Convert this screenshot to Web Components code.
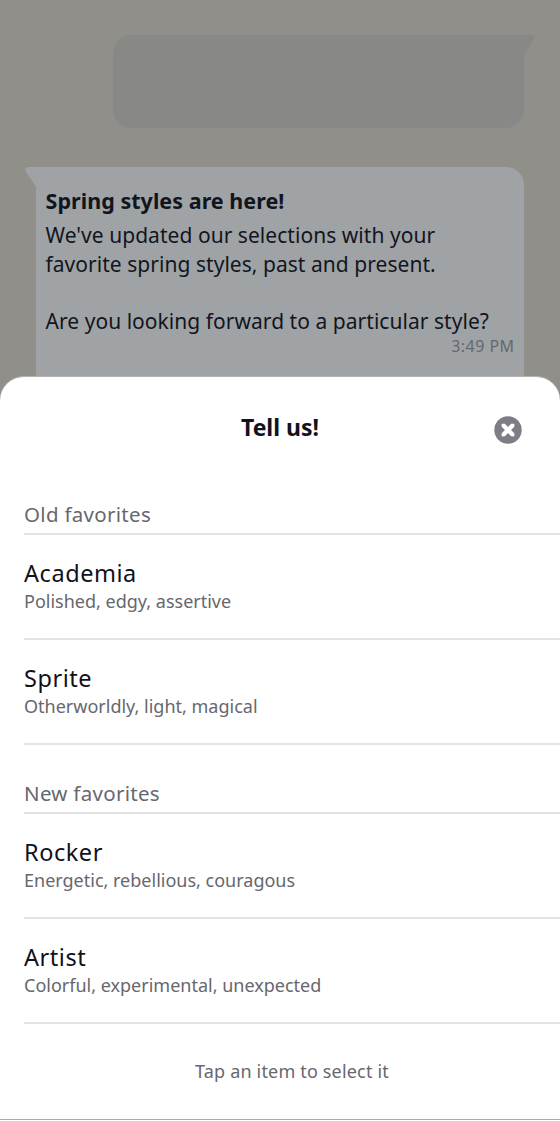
<!DOCTYPE html>
<html lang="en">
<head>
<meta charset="utf-8">
<title>Style picker</title>
<style>
html, body { margin: 0; height: 1121px; overflow: hidden; }
body { font-family: "Noto Sans", sans-serif; background: #908f8a; color: #13151e; }
</style>
</head>
<body>
<style-screen></style-screen>
<script>
const define = (name, html) => customElements.define(name, class extends HTMLElement {
  constructor() {
    super();
    const t = document.createElement('template');
    t.innerHTML = html;
    this.attachShadow({ mode: 'open' }).append(t.content.cloneNode(true));
  }
});

define('sent-bubble', `
<style>
:host { display: block; width: 423px; height: 93px; margin-left: 113px; }
svg { display: block; }
</style>
<svg width="423" height="93" viewBox="0 0 423 93"><path fill="#888886" d="M18 0H419.500Q422 1 421 4L411 20V75A18 18 0 0 1 393 93H18A18 18 0 0 1 0 75V18A18 18 0 0 1 18 0Z"/></svg>`);

define('received-bubble', `
<style>
:host { display: grid; width: 499px; height: 240px; margin-left: 25px; }
svg, .content { grid-area: 1 / 1; }
.content { padding: 20px 10px 0 20.500px; display: flex; flex-direction: column; }
.title { font-weight: 700; font-size: 21.500px; line-height: 28px; color: #12151e; height: 34px; white-space: nowrap; letter-spacing: .04px; }
.body { font-size: 21px; line-height: 28.670px; white-space: nowrap; letter-spacing: .04px; }
.time { align-self: flex-end; font-size: 16px; line-height: 22px; color: #65686d; letter-spacing: .45px; margin: -1px -.5px 0 0; }
</style>
<svg width="499" height="240" viewBox="0 0 499 240"><path fill="#9fa3a5" d="M3 0H481A18 18 0 0 1 499 18V240H11V20L.5 4Q-.5 1 3 0Z"/></svg>
<div class="content">
  <div class="title"><slot name="title"></slot></div>
  <div class="body"><slot></slot></div>
  <div class="time"><slot name="time"></slot></div>
</div>`);

define('close-button', `
<style>:host { display: block; width: 28px; height: 28px; } svg { display: block; }</style>
<svg width="28" height="28" viewBox="0 0 28 28"><circle cx="14" cy="14" r="13.700" fill="#7e7d85"/><path d="M9 9L19 19M19 9L9 19" stroke="#fff" stroke-width="4.400"/><path d="M9 9L19 19M19 9L9 19" stroke="#fff" stroke-width="3" stroke-linecap="round"/></svg>`);

define('sheet-header', `
<style>
:host { display: grid; grid-template-columns: 1fr auto 1fr; height: 116px; padding: 34px 38px 0 38px; box-sizing: border-box; align-items: start; }
h1 { grid-column: 2; margin: 0; font-size: 23px; line-height: 32px; font-weight: 700; color: #12121c; white-space: nowrap; }
close-button { justify-self: end; margin-top: 5px; }
</style>
<h1><slot></slot></h1><close-button></close-button>`);

define('style-group', `
<style>
:host { display: block; padding-left: 24px; }
:host(:not(:first-of-type)) { padding-top: 27px; }
.label { box-sizing: border-box; height: 42px; padding-top: 7px; border-bottom: 2px solid #e4e4e4; font-size: 20.500px; line-height: 28px; color: #67676d; letter-spacing: .3px; }
</style>
<div class="label"><slot name="label"></slot></div><slot></slot>`);

define('style-item', `
<style>
:host { display: block; box-sizing: border-box; height: 105px; padding-top: 22px; border-bottom: 2px solid #e4e4e4; white-space: nowrap; }
.name { font-size: 23.500px; line-height: 32px; color: #111119; letter-spacing: .55px; }
.note { font-size: 18px; line-height: 24px; color: #67676d; }
</style>
<div class="name"><slot name="name"></slot></div><div class="note"><slot></slot></div>`);

define('bottom-sheet', `
<style>
:host { display: flex; flex-direction: column; box-sizing: border-box; background: #fff; border-top: 1px solid #b1b0b4; border-radius: 24px 24px 0 0; height: 745px; }
.hint { flex: 1; padding: 35px 0 0 24px; text-align: center; font-size: 18px; line-height: 24px; color: #67676d; letter-spacing: .17px; }
.rule { height: 1px; background: #ababab; margin-bottom: 1px; }
</style>
<slot name="header"></slot><slot></slot>
<div class="hint"><slot name="hint"></slot></div>
<div class="rule"></div>`);

define('style-screen', `
<style>
:host { display: block; position: relative; height: 1121px; background: #908f8a; overflow: hidden; }
.chat { display: flex; flex-direction: column; gap: 39px; padding-top: 35px; }
bottom-sheet { position: absolute; left: 0; right: 0; bottom: 0; }
</style>
<div class="chat">
  <sent-bubble></sent-bubble>
  <received-bubble>
    <span slot="title">Spring styles are here!</span>
    <span>We've updated our selections with your</span><br><span>favorite spring styles, past and present.</span><br><br><span>Are you looking forward to a particular style?</span>
    <span slot="time">3:49 PM</span>
  </received-bubble>
</div>
<bottom-sheet>
  <sheet-header slot="header">Tell us!</sheet-header>
  <style-group><span slot="label">Old favorites</span>
    <style-item><span slot="name">Academia</span>Polished, edgy, assertive</style-item>
    <style-item><span slot="name">Sprite</span>Otherworldly, light, magical</style-item>
  </style-group>
  <style-group><span slot="label">New favorites</span>
    <style-item><span slot="name">Rocker</span>Energetic, rebellious, couragous</style-item>
    <style-item><span slot="name">Artist</span>Colorful, experimental, unexpected</style-item>
  </style-group>
  <span slot="hint">Tap an item to select it</span>
</bottom-sheet>`);
</script>
</body>
</html>
